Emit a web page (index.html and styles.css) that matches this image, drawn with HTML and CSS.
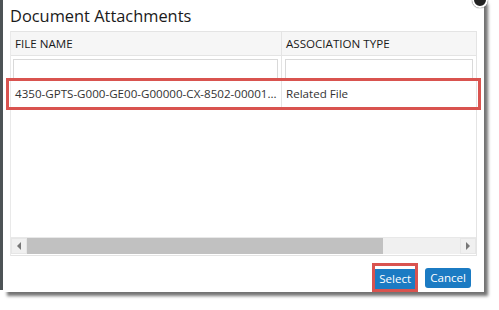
FILE: index.html
```html
<!DOCTYPE html>
<html>
<head>
<meta charset="utf-8">
<link rel="stylesheet" href="styles.css">
</head>
<body>
<div class="page">
  <div class="edge"></div>
  <div class="dialog">
    <div class="close"></div>
    <h1 class="title">Document Attachments</h1>
    <div class="grid">
      <div class="row head">
        <div class="cell c1">FILE NAME</div>
        <div class="cell c2">ASSOCIATION TYPE</div>
      </div>
      <div class="row filter">
        <div class="cell c1"><div class="input"></div></div>
        <div class="cell c2"><div class="input"></div></div>
      </div>
      <div class="row data">
        <div class="cell c1">4350-GPTS-G000-GE00-G00000-CX-8502-00001...</div>
        <div class="cell c2">Related File</div>
      </div>
      <div class="body"></div>
      <div class="scroll">
        <div class="arrow"><svg width="6" height="8" viewBox="0 0 6 8"><path d="M5 0 L1 4 L5 8 Z" fill="#777"/></svg></div>
        <div class="thumb"></div>
        <div class="track"></div>
        <div class="arrow"><svg width="6" height="8" viewBox="0 0 6 8"><path d="M1 0 L5 4 L1 8 Z" fill="#777"/></svg></div>
      </div>
    </div>
    <div class="footer">
      <div class="hl"><button class="btn">Select</button></div>
      <button class="btn">Cancel</button>
    </div>
  </div>
</div>
</body>
</html>
```
FILE: styles.css
```css
* { box-sizing: border-box; }
html, body { margin: 0; padding: 0; background: #fff; }
body { width: 499px; height: 310px; overflow: hidden; font-family: "Open Sans", "Noto Sans", sans-serif; color: #333; }
.page { display: flex; align-items: flex-start; height: 310px; }
.edge { width: 3px; height: 290px; background: #4d5356; flex: none; }
.dialog {
  position: relative;
  width: 481px; height: 292px; background: #fff; flex: none;
  box-shadow: 4px 4px 3px rgba(0,0,0,0.55);
  padding: 0 7px 0 7px;
  display: flex; flex-direction: column;
}
.close {
  position: absolute; right: -4px; top: -8px; width: 16px; height: 16px;
  border-radius: 50%; background: #222; border: 2px solid #fff;
  box-shadow: 0 0 1px #000;
}
.title { margin: 0; font-size: 16.4px; font-weight: 400; color: #1a1a1a; line-height: 20px; padding: 6px 0 0 0; height: 31px; }
.grid { margin: 0; border: 1px solid #e4e4e4; border-left-color: #e9e9e9; display: flex; flex-direction: column; height: 228px; position: relative; }
.row { display: flex; }
.cell { font-size: 11.6px; white-space: nowrap; overflow: hidden; }
.c1 { width: 271px; border-right: 1px solid #e4e4e4; }
.c2 { flex: 1; }
.head { background: #f6f6f6; height: 24px; border-bottom: 1px solid #e4e4e4; }
.head .cell { line-height: 23px; padding-left: 4px; color: #1a1a1a; font-weight: 500; }
.filter { height: 24px; }
.filter .cell { padding: 3px 3px 0 2px; }
.filter .c2 { padding-left: 3px; }
.input { height: 21px; border: 1px solid #d9d9d9; border-bottom: none; }
.data { height: 28px; outline: 3px solid #d9534f; outline-offset: -1px; margin: 0 -3px; padding: 0 3px; border-top: 1px solid #e4e4e4; border-bottom: 1px solid #e4e4e4; }
.data .cell { line-height: 26px; padding-left: 4px; color: #333; }
.data .c1 { width: 271px; }
.body { flex: 1; }
.scroll { height: 17px; display: flex; margin: 0 0 1px 0; border-top: 1px solid #e8e8e8; }
.arrow { width: 16px; background: #f0f0f0; display: flex; align-items: center; justify-content: center; border: 1px solid #e6e6e6; }
.thumb { width: 356px; background: #c1c1c1; }
.track { flex: 1; background: #f0f0f0; }
.footer { display: flex; justify-content: flex-end; align-items: center; gap: 7px; padding: 7px 6px 0 0; }
.hl { border: 3px solid #d9534f; padding: 0; }
.btn {
  font-family: "Open Sans", "Noto Sans", sans-serif; font-size: 11.6px; color: #fff;
  background: #1b7bc3; border: none; border-radius: 3px; height: 20px; padding: 0 5px; line-height: 20px;
}
.hl .btn { border-radius: 0; padding: 0 4px; }
```
